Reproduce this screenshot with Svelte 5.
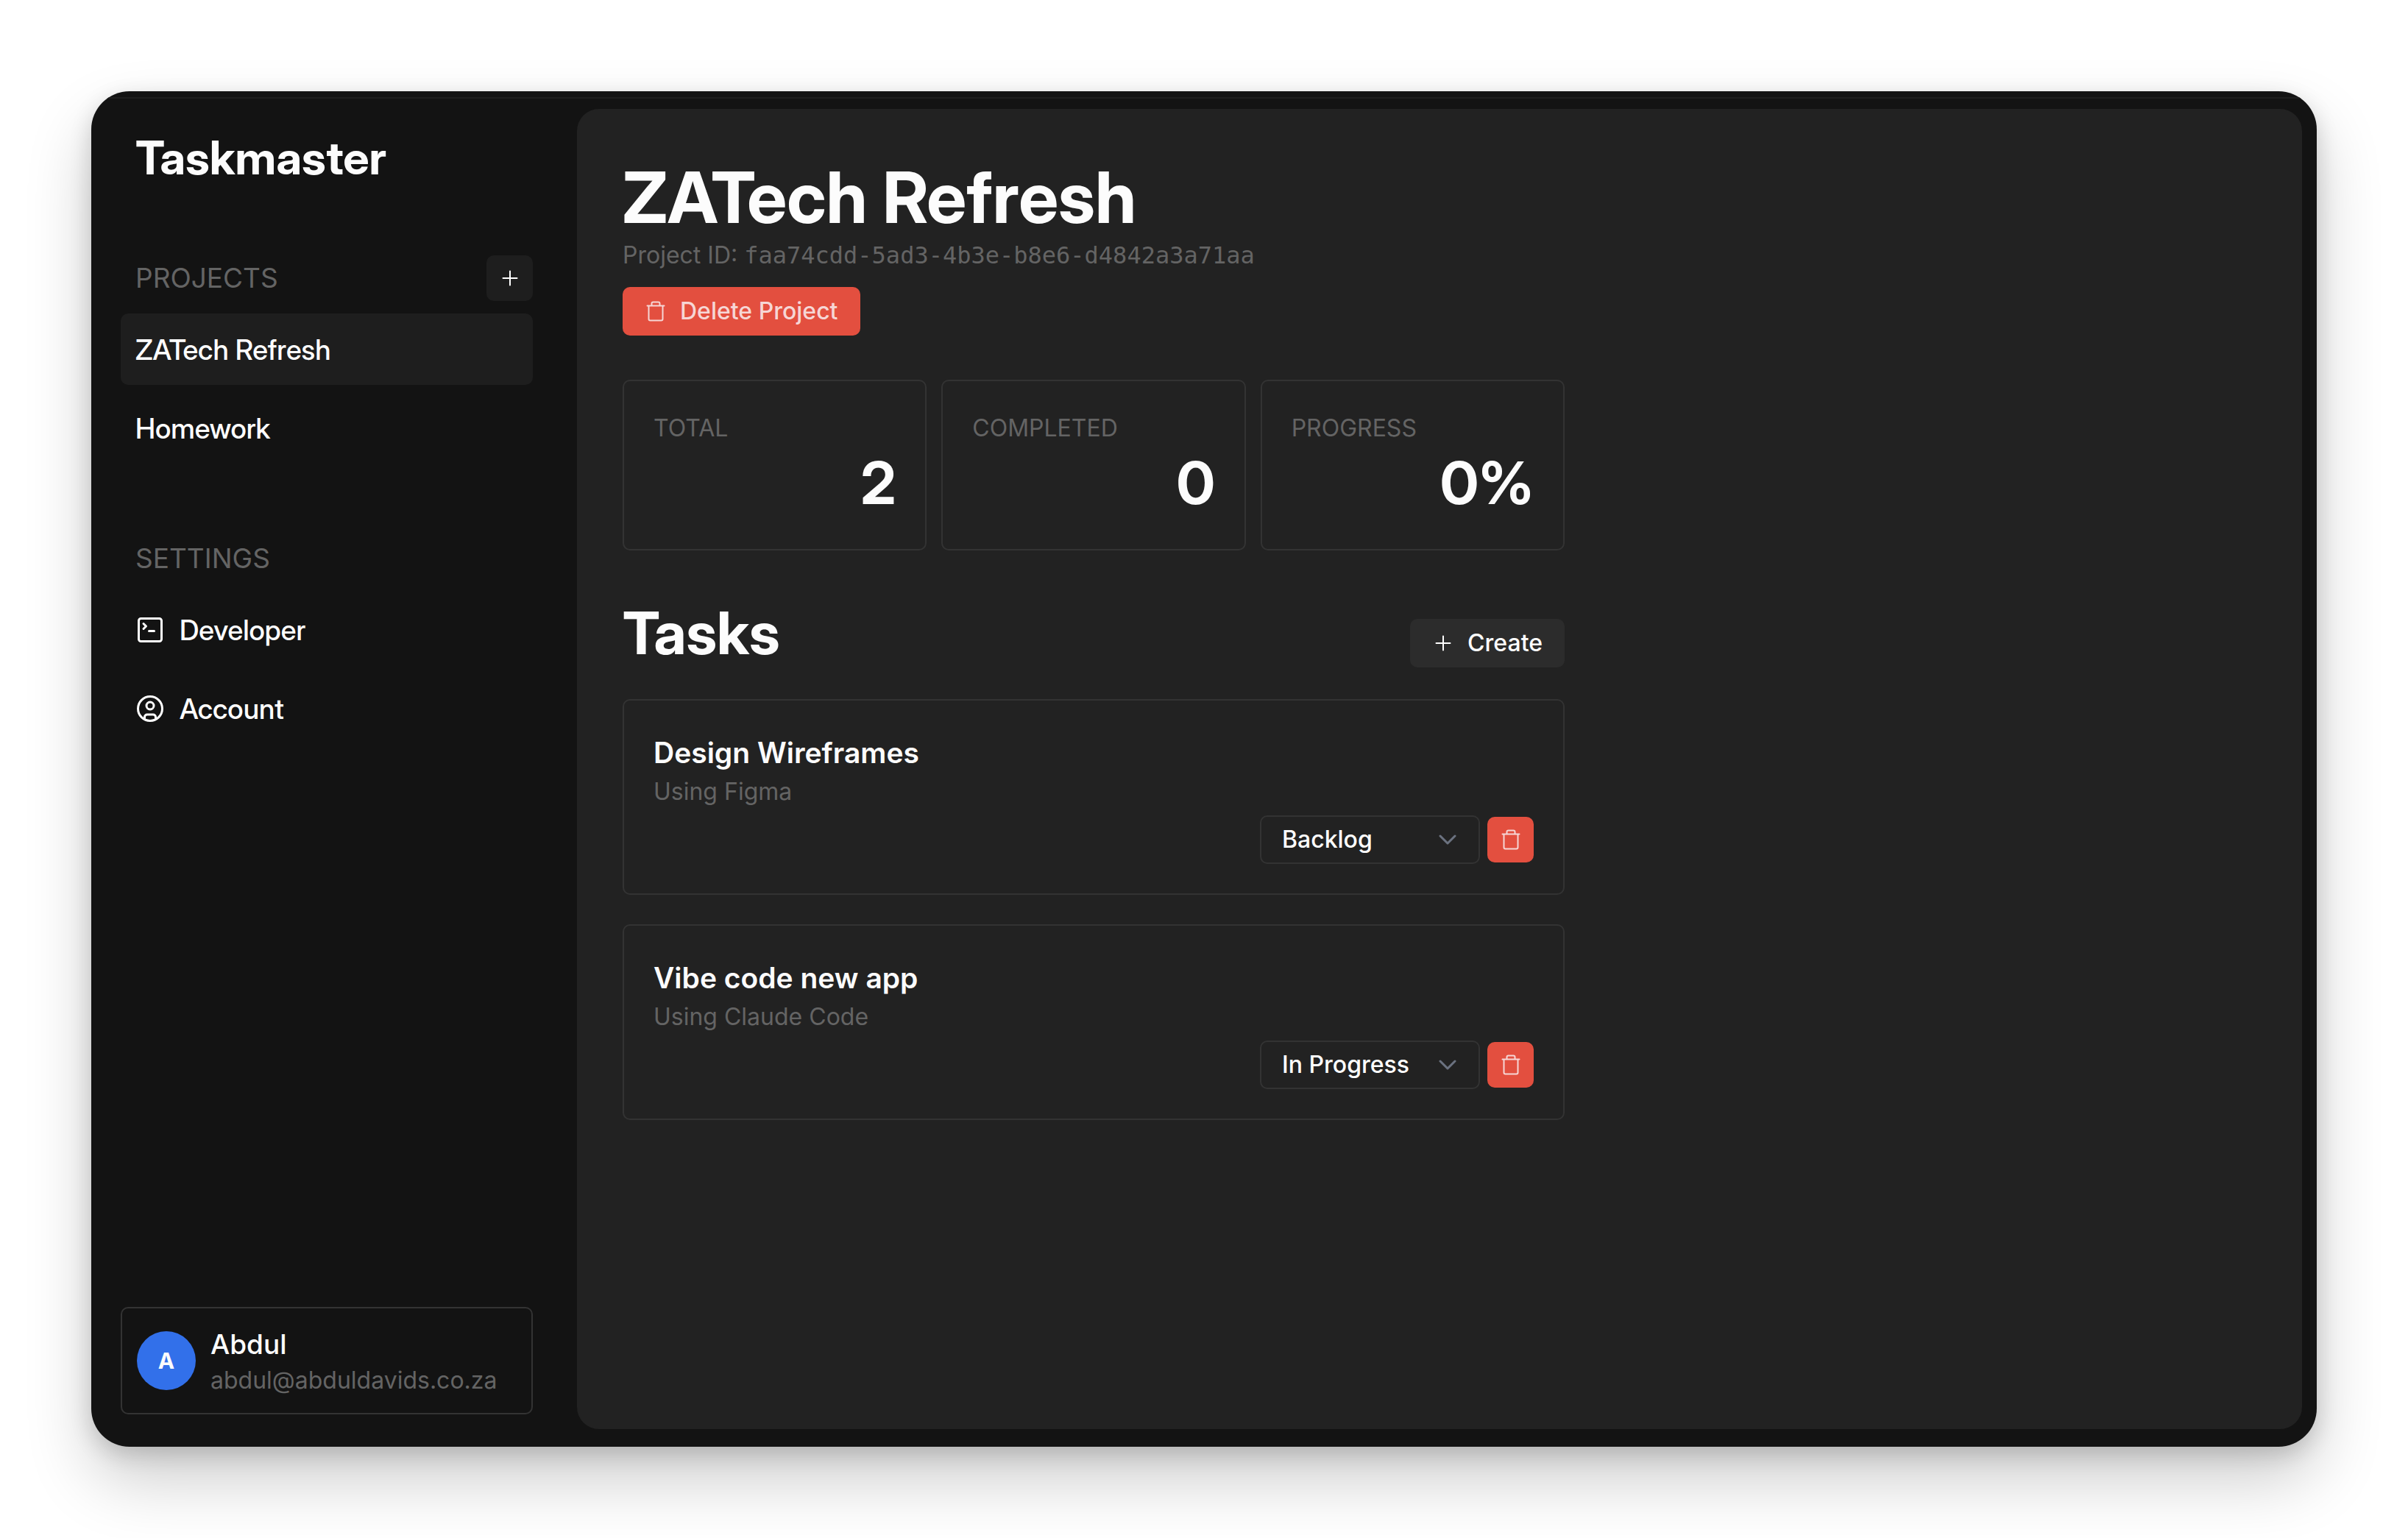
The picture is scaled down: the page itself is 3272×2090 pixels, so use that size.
<script>
  const projects = ['ZATech Refresh', 'Homework'];
  let current = $state('ZATech Refresh');
  const stats = [
    { label: 'Total', value: '2' },
    { label: 'Completed', value: '0' },
    { label: 'Progress', value: '0%' }
  ];
  const statuses = ['Backlog', 'In Progress', 'Done'];
  let tasks = $state([
    { id: 1, title: 'Design Wireframes', note: 'Using Figma', status: 'Backlog' },
    { id: 2, title: 'Vibe code new app', note: 'Using Claude Code', status: 'In Progress' }
  ]);
</script>

{#snippet trash()}
  <svg class="icon" viewBox="0 0 30 30" aria-hidden="true">
    <path d="M3.500 7.500h23M5.500 7.500V25.500a2 2 0 0 0 2 2h15a2 2 0 0 0 2-2V7.500M9.500 7.500V4.500a2 2 0 0 1 2-2h7a2 2 0 0 1 2 2v3" />
  </svg>
{/snippet}

{#snippet plus()}
  <svg class="icon" viewBox="0 0 30 30" aria-hidden="true"><path d="M15 5.500v19M5.500 15h19" /></svg>
{/snippet}

<div class="desktop">
  <div class="window">
    <div class="titlebar"></div>
    <div class="body">
      <aside>
        <div class="brand">Taskmaster</div>
        <nav class="projects" aria-label="Projects">
          <div class="heading">
            <h2>PROJECTS</h2>
            <button class="square dark" aria-label="Add project">{@render plus()}</button>
          </div>
          <div class="links">
            {#each projects as name}
              <a href="#project" class="link" class:active={current === name} onclick={() => (current = name)}>{name}</a>
            {/each}
          </div>
        </nav>
        <nav class="settings" aria-label="Settings">
          <div class="heading"><h2>SETTINGS</h2></div>
          <div class="links">
            <a href="#developer" class="link">
              <svg class="nav-icon" viewBox="-2 -2 40 40" aria-hidden="true">
                <rect x="2.500" y="2.500" width="31" height="31" rx="3" />
                <path d="M9 9.500l3.500 3.500L9 16.500M16.500 19.500h7" />
              </svg>
              Developer
            </a>
            <a href="#account" class="link">
              <svg class="nav-icon" viewBox="-2 -2 40 40" aria-hidden="true">
                <circle cx="18" cy="18" r="16.500" />
                <circle cx="18" cy="14" r="5" />
                <path d="M10.500 31v-1.500a3.500 3.500 0 0 1 3.500-3.500h8a3.500 3.500 0 0 1 3.500 3.500V31" />
              </svg>
              Account
            </a>
          </div>
        </nav>
        <div class="user">
          <div class="avatar">A</div>
          <div class="who">
            <div class="name">Abdul</div>
            <div class="email">abdul@abduldavids.co.za</div>
          </div>
        </div>
      </aside>

      <main>
        <div class="content">
          <h1>ZATech Refresh</h1>
          <p class="pid">Project ID: <code>faa74cdd-5ad3-4b3e-b8e6-d4842a3a71aa</code></p>
          <button class="button danger">{@render trash()}Delete Project</button>

          <section class="stats">
            {#each stats as s}
              <div class="card">
                <div class="label">{s.label.toUpperCase()}</div>
                <div class="value">{s.value}</div>
              </div>
            {/each}
          </section>

          <div class="tasks-head">
            <h2>Tasks</h2>
            <button class="button neutral">{@render plus()}Create</button>
          </div>

          <div class="tasks">
            {#each tasks as task (task.id)}
              <article class="card">
                <h3>{task.title}</h3>
                <p>{task.note}</p>
                <div class="actions">
                  <div class="select">
                    <select aria-label="Status of {task.title}" bind:value={task.status}>
                      {#each statuses as st}<option value={st}>{st}</option>{/each}
                    </select>
                    <svg class="chevron" viewBox="0 0 24 14" aria-hidden="true"><path d="M2 2l10 10L22 2" /></svg>
                  </div>
                  <button class="square danger" aria-label="Delete {task.title}">{@render trash()}</button>
                </div>
              </article>
            {/each}
          </div>
        </div>
      </main>
    </div>
  </div>
</div>

<style>
  :global(body) {
    background: #fff;
  }
  * {
    box-sizing: border-box;
    margin: 0;
  }
  .desktop {
    display: flex;
    min-height: 100vh;
    padding: 124px;
    font-family: Inter, 'Liberation Sans', sans-serif;
    font-size: 32px;
    line-height: 44px;
    color: #fcfcfc;
  }
  .window {
    flex: 1;
    display: flex;
    flex-direction: column;
    background: #131313;
    border-radius: 52px;
    overflow: hidden;
    box-shadow: 0 44px 90px rgba(0, 0, 0, 0.2), 0 10px 30px rgba(0, 0, 0, 0.16);
  }
  .titlebar {
    height: 10px;
    border-bottom: 2px solid #1e1e1e;
  }
  .body {
    flex: 1;
    display: flex;
  }
  aside {
    width: 660px;
    padding: 40px 60px 44px 40px;
    display: flex;
    flex-direction: column;
  }
  .brand,
  .link,
  h1,
  .tasks-head h2,
  .value {
    font-family: 'Inter Display', Inter, 'Liberation Sans', sans-serif;
    font-weight: 700;
  }
  .brand {
    padding-left: 20px;
    font-size: 63px;
    line-height: 80px;
  }
  .projects {
    margin-top: 93px;
  }
  .settings {
    margin-top: 98px;
  }
  .heading {
    display: flex;
    align-items: center;
    justify-content: space-between;
    min-height: 62px;
    padding-left: 20px;
    margin-bottom: 17px;
  }
  .heading h2 {
    font-size: 37px;
    line-height: 48px;
    font-weight: 400;
    color: #646464;
  }
  .links {
    display: flex;
    flex-direction: column;
    gap: 10px;
  }
  .link {
    display: flex;
    align-items: center;
    gap: 20px;
    height: 97px;
    padding: 0 20px;
    border-radius: 10px;
    font-size: 38px;
    font-weight: 500;
    color: #fff;
    text-decoration: none;
  }
  .active {
    background: #1e1e1e;
  }
  svg {
    fill: none;
    stroke: currentColor;
    stroke-linecap: round;
    stroke-linejoin: round;
    flex: none;
  }
  .nav-icon {
    width: 40px;
    height: 40px;
    stroke-width: 3;
  }
  .icon {
    width: 30px;
    height: 30px;
    stroke-width: 2;
  }
  button,
  select {
    font: inherit;
    font-weight: 500;
    border: 0;
    cursor: pointer;
  }
  .square {
    display: flex;
    align-items: center;
    justify-content: center;
    width: 63px;
    height: 62px;
    padding: 0;
    border-radius: 10px;
  }
  .dark {
    background: #1e1e1e;
    color: #fff;
  }
  .danger {
    background: #e34f3f;
    color: #f6d6d5;
  }
  .user {
    margin-top: auto;
    display: flex;
    align-items: center;
    gap: 20px;
    padding: 22px 20px;
    border: 2px solid #333;
    border-radius: 10px;
  }
  .avatar {
    width: 80px;
    height: 80px;
    border-radius: 50%;
    background: #3270ea;
    display: flex;
    align-items: center;
    justify-content: center;
    font-size: 30px;
    font-weight: 700;
  }
  .name {
    font-size: 37px;
    line-height: 54px;
    font-weight: 500;
  }
  .email {
    color: #646464;
  }
  main {
    flex: 1;
    margin: 14px 20px 24px 0;
    padding: 62px;
    border-radius: 30px;
    background: #222;
  }
  .content {
    max-width: 1280px;
  }
  h1 {
    font-size: 96px;
    line-height: 116px;
  }
  .pid {
    height: 40px;
    margin-top: 1px;
    line-height: 40px;
    color: #646464;
  }
  code {
    font-family: 'DejaVu Sans Mono', monospace;
    line-height: 1;
  }
  .button {
    display: flex;
    align-items: center;
    gap: 18px;
    height: 66px;
    padding: 0 30px;
    border-radius: 10px;
  }
  .content > .button {
    margin-top: 23px;
  }
  .neutral {
    background: #2c2c2c;
    color: #fff;
  }
  .stats {
    display: grid;
    grid-template-columns: repeat(3, 1fr);
    gap: 20px;
    margin-top: 60px;
  }
  .card {
    padding: 42px 40px 38px;
    border: 2px solid #333;
    border-radius: 10px;
  }
  .label {
    color: #646464;
  }
  .value {
    font-size: 80px;
    line-height: 104px;
    text-align: right;
  }
  .tasks-head {
    display: flex;
    align-items: flex-end;
    justify-content: space-between;
    margin-top: 65px;
  }
  .tasks-head h2 {
    font-size: 80px;
    line-height: 94px;
  }
  .tasks {
    display: flex;
    flex-direction: column;
    gap: 40px;
    margin-top: 43px;
  }
  article.card {
    padding-bottom: 40px;
  }
  h3 {
    font-size: 39px;
    line-height: 58px;
    margin-bottom: 2px;
    font-weight: 600;
  }
  article p {
    color: #646464;
  }
  .actions {
    display: flex;
    align-items: center;
    justify-content: flex-end;
    gap: 10px;
    margin-top: 10px;
  }
  .select {
    display: grid;
    align-items: center;
    width: 299px;
  }
  select {
    grid-area: 1 / 1;
    appearance: none;
    width: 100%;
    height: 66px;
    padding: 0 72px 0 28px;
    background: transparent;
    border: 2px solid #333;
    border-radius: 10px;
    color: #fff;
  }
  option {
    color: #222;
  }
  .chevron {
    grid-area: 1 / 1;
    justify-self: end;
    margin-right: 32px;
    width: 24px;
    height: 14px;
    stroke: #6b7280;
    stroke-width: 3;
    pointer-events: none;
  }
</style>
